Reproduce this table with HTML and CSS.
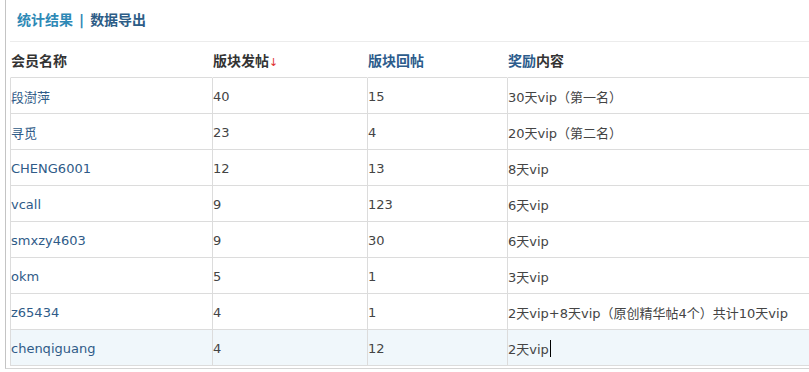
FILE: index.html
```html
<!DOCTYPE html>
<html lang="zh">
<head>
<meta charset="utf-8">
<link rel="stylesheet" href="styles.css">
</head>
<body>
<div class="panel">
  <div class="tabs"><span class="tab-a">统计结果</span><span class="sep">|</span><span class="tab-b">数据导出</span></div>
  <div class="grid">
    <div class="th">会员名称</div>
    <div class="th">版块发帖<span class="arrow">↓</span></div>
    <div class="th blue">版块回帖</div>
    <div class="th"><span class="blue">奖励</span>内容</div>

    <div class="td name">段澍萍</div><div class="td">40</div><div class="td">15</div><div class="td">30天vip（第一名）</div>
    <div class="td name">寻觅</div><div class="td">23</div><div class="td">4</div><div class="td">20天vip（第二名）</div>
    <div class="td name">CHENG6001</div><div class="td">12</div><div class="td">13</div><div class="td">8天vip</div>
    <div class="td name">vcall</div><div class="td">9</div><div class="td">123</div><div class="td">6天vip</div>
    <div class="td name">smxzy4603</div><div class="td">9</div><div class="td">30</div><div class="td">6天vip</div>
    <div class="td name">okm</div><div class="td">5</div><div class="td">1</div><div class="td">3天vip</div>
    <div class="td name">z65434</div><div class="td">4</div><div class="td">1</div><div class="td">2天vip+8天vip（原创精华帖4个）共计10天vip</div>
    <div class="td name hl">chenqiguang</div><div class="td hl">4</div><div class="td hl">12</div><div class="td hl">2天vip<span class="caret"></span></div>
  </div>
</div>
</body>
</html>
```

FILE: styles.css
```css
html, body {
  margin: 0;
  padding: 0;
  background: #fff;
}
body {
  font-family: "DejaVu Sans", "Noto Sans CJK SC", sans-serif;
  font-size: 13px;
  color: #444;
  height: 372px;
  overflow: hidden;
}
.panel {
  margin-left: 5px;
  border-left: 1px solid #c4c4c4;
  padding-left: 4px;
  height: 369px;
  box-sizing: border-box;
  border-bottom: 1px solid #d4d4d4;
}
.tabs {
  height: 42px;
  box-sizing: border-box;
  border-bottom: 1px solid #ececec;
  padding-left: 7px;
  padding-top: 10px;
  font-weight: bold;
  font-size: 14px;
  line-height: 20px;
}
.tab-a { color: #2e89b6; }
.sep { color: #2e89b6; margin: 0 6px; }
.tab-b { color: #2c5c86; }
.grid {
  display: grid;
  grid-template-columns: 202px 155px 140px 1fr;
}
.th, .td {
  box-sizing: border-box;
  height: 36px;
  border-bottom: 1px solid #dcdcdc;
  border-left: 1px solid #dcdcdc;
  display: flex;
  align-items: center;
  white-space: nowrap;
}
.th {
  border-left-color: transparent;
  font-weight: bold;
  font-size: 14px;
  color: #333;
}
.td { padding-top: 1px; }
.blue { color: #2c5c8c; }
.arrow {
  color: #e03030;
  font-weight: normal;
  font-size: 11px;
  margin-top: 5px;
}
.name { color: #2f5b88; }
.hl { background: #f0f7fb; }
.caret {
  display: inline-block;
  width: 1px;
  height: 17px;
  background: #000;
  margin-left: 1px;
}
```
